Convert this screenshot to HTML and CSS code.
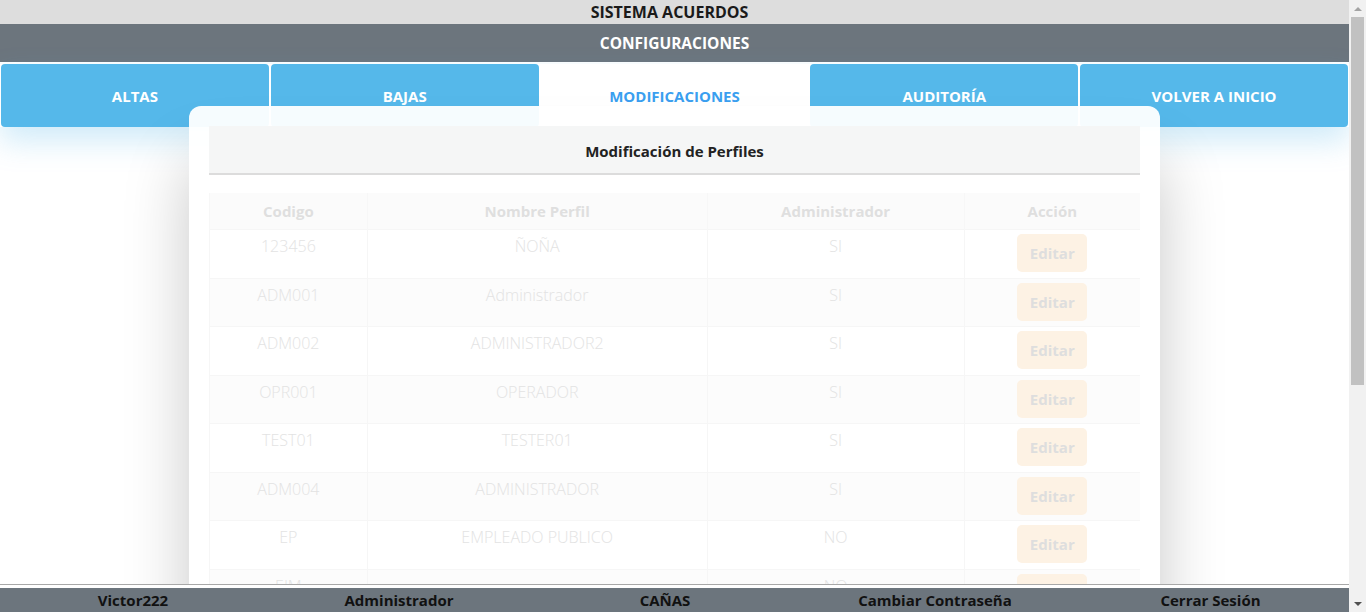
FILE: index.html
```html
<!DOCTYPE html>
<html lang="es">
<head>
<meta charset="utf-8">
<title>Sistema Acuerdos - Configuraciones</title>
<link rel="stylesheet" href="styles.css">
</head>
<body>
<div class="page">
  <header class="app-title">SISTEMA ACUERDOS</header>
  <div class="section-bar">CONFIGURACIONES</div>
  <nav class="tabs">
    <a class="tab">ALTAS</a>
    <a class="tab">BAJAS</a>
    <a class="tab active">MODIFICACIONES</a>
    <a class="tab">AUDITORÍA</a>
    <a class="tab">VOLVER A INICIO</a>
  </nav>
  <main class="card">
    <div class="card-head">Modificación de Perfiles</div>
    <table class="grid">
      <thead>
        <tr><th class="c1">Codigo</th><th class="c2">Nombre Perfil</th><th class="c3">Administrador</th><th class="c4">Acción</th></tr>
      </thead>
      <tbody>
        <tr><td>123456</td><td>ÑOÑA</td><td>SI</td><td><button class="edit">Editar</button></td></tr>
        <tr><td>ADM001</td><td>Administrador</td><td>SI</td><td><button class="edit">Editar</button></td></tr>
        <tr><td>ADM002</td><td>ADMINISTRADOR2</td><td>SI</td><td><button class="edit">Editar</button></td></tr>
        <tr><td>OPR001</td><td>OPERADOR</td><td>SI</td><td><button class="edit">Editar</button></td></tr>
        <tr><td>TEST01</td><td>TESTER01</td><td>SI</td><td><button class="edit">Editar</button></td></tr>
        <tr><td>ADM004</td><td>ADMINISTRADOR</td><td>SI</td><td><button class="edit">Editar</button></td></tr>
        <tr><td>EP</td><td>EMPLEADO PUBLICO</td><td>NO</td><td><button class="edit">Editar</button></td></tr>
        <tr><td>EJM</td><td></td><td>NO</td><td><button class="edit">Editar</button></td></tr>
        <tr><td>CAP01</td><td>CAPTURISTA</td><td>NO</td><td><button class="edit">Editar</button></td></tr>
        <tr><td>CON01</td><td>CONSULTA</td><td>NO</td><td><button class="edit">Editar</button></td></tr>
        <tr><td>SEC01</td><td>SECRETARIO</td><td>NO</td><td><button class="edit">Editar</button></td></tr>
        <tr><td>JUR01</td><td>JURIDICO</td><td>NO</td><td><button class="edit">Editar</button></td></tr>
        <tr><td>SUP01</td><td>SUPERVISOR</td><td>SI</td><td><button class="edit">Editar</button></td></tr>
        <tr><td>INV01</td><td>INVITADO</td><td>NO</td><td><button class="edit">Editar</button></td></tr>
      </tbody>
    </table>
  </main>
</div>
<footer class="status">
  <span>Victor222</span>
  <span>Administrador</span>
  <span>CAÑAS</span>
  <span>Cambiar Contraseña</span>
  <span>Cerrar Sesión</span>
</footer>
<div class="scrollbar" aria-hidden="true">
  <div class="sb-btn"><span class="arrow-up"></span></div>
  <div class="sb-track"><div class="sb-thumb"></div></div>
  <div class="sb-btn"><span class="arrow-down"></span></div>
</div>
</body>
</html>
```
FILE: styles.css
```css
html::-webkit-scrollbar {
  display: none;
}

body {
  margin: 0;
  font-family: "Open Sans", "Noto Sans", sans-serif;
  background: #ffffff;
  color: #212529;
}

.page {
  margin-right: 17px;
}

.app-title {
  height: 24px;
  line-height: 25px;
  padding-right: 10px;
  background: #dddddd;
  text-align: center;
  font-weight: 700;
  font-size: 16px;
  color: #1a1a1a;
}

.section-bar {
  height: 38px;
  line-height: 39px;
  background: #6c757d;
  color: #ffffff;
  text-align: center;
  font-weight: 700;
  font-size: 15.5px;
  margin-bottom: 2px;
}

.tabs {
  display: flex;
  gap: 2px;
  padding: 0 1px;
  box-shadow: 0 14px 30px rgba(85, 183, 234, 0.28);
}
.tab {
  flex: 1;
  height: 63px;
  line-height: 64px;
  background: #55b8ea;
  color: #ffffff;
  text-align: center;
  font-weight: 700;
  font-size: 15px;
  border-radius: 4px;
}
.tab.active {
  background: #ffffff;
  color: #3a9ff0;
  border-radius: 4px 4px 0 0;
}

.card {
  position: relative;
  width: 971px;
  margin: -21px auto 30px;
  padding: 20px;
  box-sizing: border-box;
  background: rgba(255, 255, 255, 0.95);
  border-radius: 12px;
  box-shadow: 0 55px 65px rgba(0, 0, 0, 0.22);
}

.card-head {
  height: 47px;
  line-height: 50px;
  background: #f5f6f6;
  border-bottom: 2px solid #dcdcdc;
  text-align: center;
  font-weight: 700;
  font-size: 15px;
  color: #222;
}

.grid {
  width: 100%;
  margin-top: 18px;
  border-collapse: collapse;
  table-layout: fixed;
  font-size: 15px;
}
.grid .c1 { width: 16.36%; }
.grid .c2 { width: 37.34%; }
.grid .c3 { width: 27.8%; }
.grid .c4 { width: 18.5%; }
.grid th {
  height: 36px;
  padding: 0 8px;
  background: #fbfbfb;
  color: #dfdfdf;
  font-weight: 700;
  border-left: 1px solid #f7f7f7;
}
.grid td {
  height: 38px;
  padding: 4px 8px 5.5px;
  line-height: 24px;
  vertical-align: top;
  text-align: center;
  color: #e3e3e3;
  font-weight: 300;
  font-size: 16px;
  border-top: 1px solid #f6f6f6;
  border-left: 1px solid #f6f6f6;
}
.grid tbody tr:nth-child(even) td {
  background: #fcfcfc;
}
.edit {
  width: 70px;
  height: 38px;
  border: 0;
  border-radius: 5px;
  background: #fdf2e4;
  color: #dedede;
  font-family: inherit;
  font-weight: 700;
  font-size: 15px;
  padding: 0;
}

.status {
  position: fixed;
  left: 0;
  right: 17px;
  bottom: 0;
  display: grid;
  grid-template-columns: 266px 266px 266px 274px 277px;
  height: 28px;
  box-sizing: border-box;
  padding-top: 3px;
  line-height: 24px;
  background: linear-gradient(#ffffff 0 3px, #6c757d 3px);
  border-top: 1px solid #a8a8a8;
  font-weight: 700;
  font-size: 15px;
  color: #111;
  text-align: center;
}

.scrollbar {
  position: fixed;
  top: 0;
  right: 0;
  width: 17px;
  height: 100vh;
  background: #f1f1f1;
  display: flex;
  flex-direction: column;
}
.sb-btn {
  height: 17px;
  display: flex;
  align-items: center;
  justify-content: center;
}
.arrow-up {
  width: 0;
  height: 0;
  border-left: 4px solid transparent;
  border-right: 4px solid transparent;
  border-bottom: 4px solid #a3a3a3;
}
.arrow-down {
  width: 0;
  height: 0;
  border-left: 4px solid transparent;
  border-right: 4px solid transparent;
  border-top: 4px solid #505050;
}
.sb-track {
  flex: 1;
  padding: 0 2px;
}
.sb-thumb {
  height: 368px;
  background: #c1c1c1;
}
```
